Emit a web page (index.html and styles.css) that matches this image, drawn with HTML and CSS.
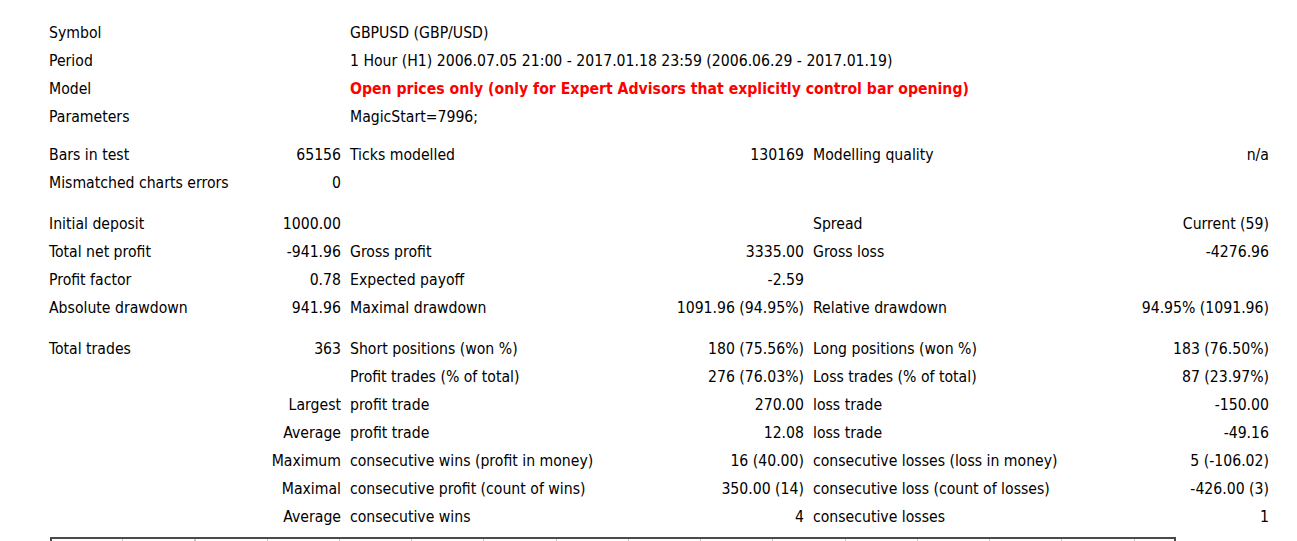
FILE: index.html
```html
<!DOCTYPE html>
<html>
<head>
<meta charset="utf-8">
<title>Strategy Tester Report</title>
<link rel="stylesheet" href="styles.css">
</head>
<body>
<div class="report">
  <div class="row"><div class="c12">Symbol</div><div class="c3456">GBPUSD (GBP/USD)</div></div>
  <div class="row"><div class="c12">Period</div><div class="c3456">1 Hour (H1) 2006.07.05 21:00 - 2017.01.18 23:59 (2006.06.29 - 2017.01.19)</div></div>
  <div class="row"><div class="c12">Model</div><div class="c3456 model">Open prices only (only for Expert Advisors that explicitly control bar opening)</div></div>
  <div class="row"><div class="c12">Parameters</div><div class="c3456">MagicStart=7996;</div></div>

  <div class="row sp1"><div>Bars in test</div><div class="r">65156</div><div>Ticks modelled</div><div class="r">130169</div><div>Modelling quality</div><div class="r">n/a</div></div>
  <div class="row"><div class="c1w">Mismatched charts errors</div><div class="r">0</div></div>

  <div class="row sp2"><div>Initial deposit</div><div class="r">1000.00</div><div></div><div></div><div>Spread</div><div class="r">Current (59)</div></div>
  <div class="row"><div>Total net profit</div><div class="r">-941.96</div><div>Gross profit</div><div class="r">3335.00</div><div>Gross loss</div><div class="r">-4276.96</div></div>
  <div class="row"><div>Profit factor</div><div class="r">0.78</div><div>Expected payoff</div><div class="r">-2.59</div><div></div><div></div></div>
  <div class="row"><div>Absolute drawdown</div><div class="r">941.96</div><div>Maximal drawdown</div><div class="r">1091.96 (94.95%)</div><div>Relative drawdown</div><div class="r">94.95% (1091.96)</div></div>

  <div class="row sp2"><div>Total trades</div><div class="r">363</div><div>Short positions (won %)</div><div class="r">180 (75.56%)</div><div>Long positions (won %)</div><div class="r">183 (76.50%)</div></div>
  <div class="row"><div></div><div></div><div>Profit trades (% of total)</div><div class="r">276 (76.03%)</div><div>Loss trades (% of total)</div><div class="r">87 (23.97%)</div></div>
  <div class="row"><div></div><div class="r">Largest</div><div>profit trade</div><div class="r">270.00</div><div>loss trade</div><div class="r">-150.00</div></div>
  <div class="row"><div></div><div class="r">Average</div><div>profit trade</div><div class="r">12.08</div><div>loss trade</div><div class="r">-49.16</div></div>
  <div class="row"><div></div><div class="r">Maximum</div><div>consecutive wins (profit in money)</div><div class="r">16 (40.00)</div><div>consecutive losses (loss in money)</div><div class="r">5 (-106.02)</div></div>
  <div class="row"><div></div><div class="r">Maximal</div><div>consecutive profit (count of wins)</div><div class="r">350.00 (14)</div><div>consecutive loss (count of losses)</div><div class="r">-426.00 (3)</div></div>
  <div class="row"><div></div><div class="r">Average</div><div>consecutive wins</div><div class="r">4</div><div>consecutive losses</div><div class="r">1</div></div>
</div>
<div class="chart"></div>
</body>
</html>
```

FILE: styles.css
```css
html, body {
  margin: 0;
  padding: 0;
  background: #ffffff;
}
body {
  padding: 19px 0 0 49px;
  font-family: "DejaVu Sans Condensed", "Liberation Sans", sans-serif;
  font-size: 15.65px;
  color: #000000;
  overflow: hidden;
}
.report {
  display: flex;
  flex-direction: column;
}
.row {
  display: grid;
  grid-template-columns: 151px 132px 250px 195px 247px 200px;
  column-gap: 9px;
  height: 28px;
  line-height: 28px;
  white-space: nowrap;
}
.row > div {
  min-width: 0;
}
.r {
  text-align: right;
}
.c12 {
  grid-column: 1 / 3;
}
.c3456 {
  grid-column: 3 / 7;
}
.c1w {
  overflow: visible;
}
.model {
  color: #ff0000;
  font-weight: bold;
}
.sp1 {
  margin-top: 10px;
}
.sp2 {
  margin-top: 13px;
}
.chart {
  margin: 6px 0 0 1px;
  width: 1122px;
  height: 200px;
  border: 2px solid #4a4a4a;
  background-image: repeating-linear-gradient(to right, transparent 0, transparent 70.25px, #c8c8c8 70.25px, #c8c8c8 71.25px, transparent 71.25px, transparent 72.25px);
}
```
